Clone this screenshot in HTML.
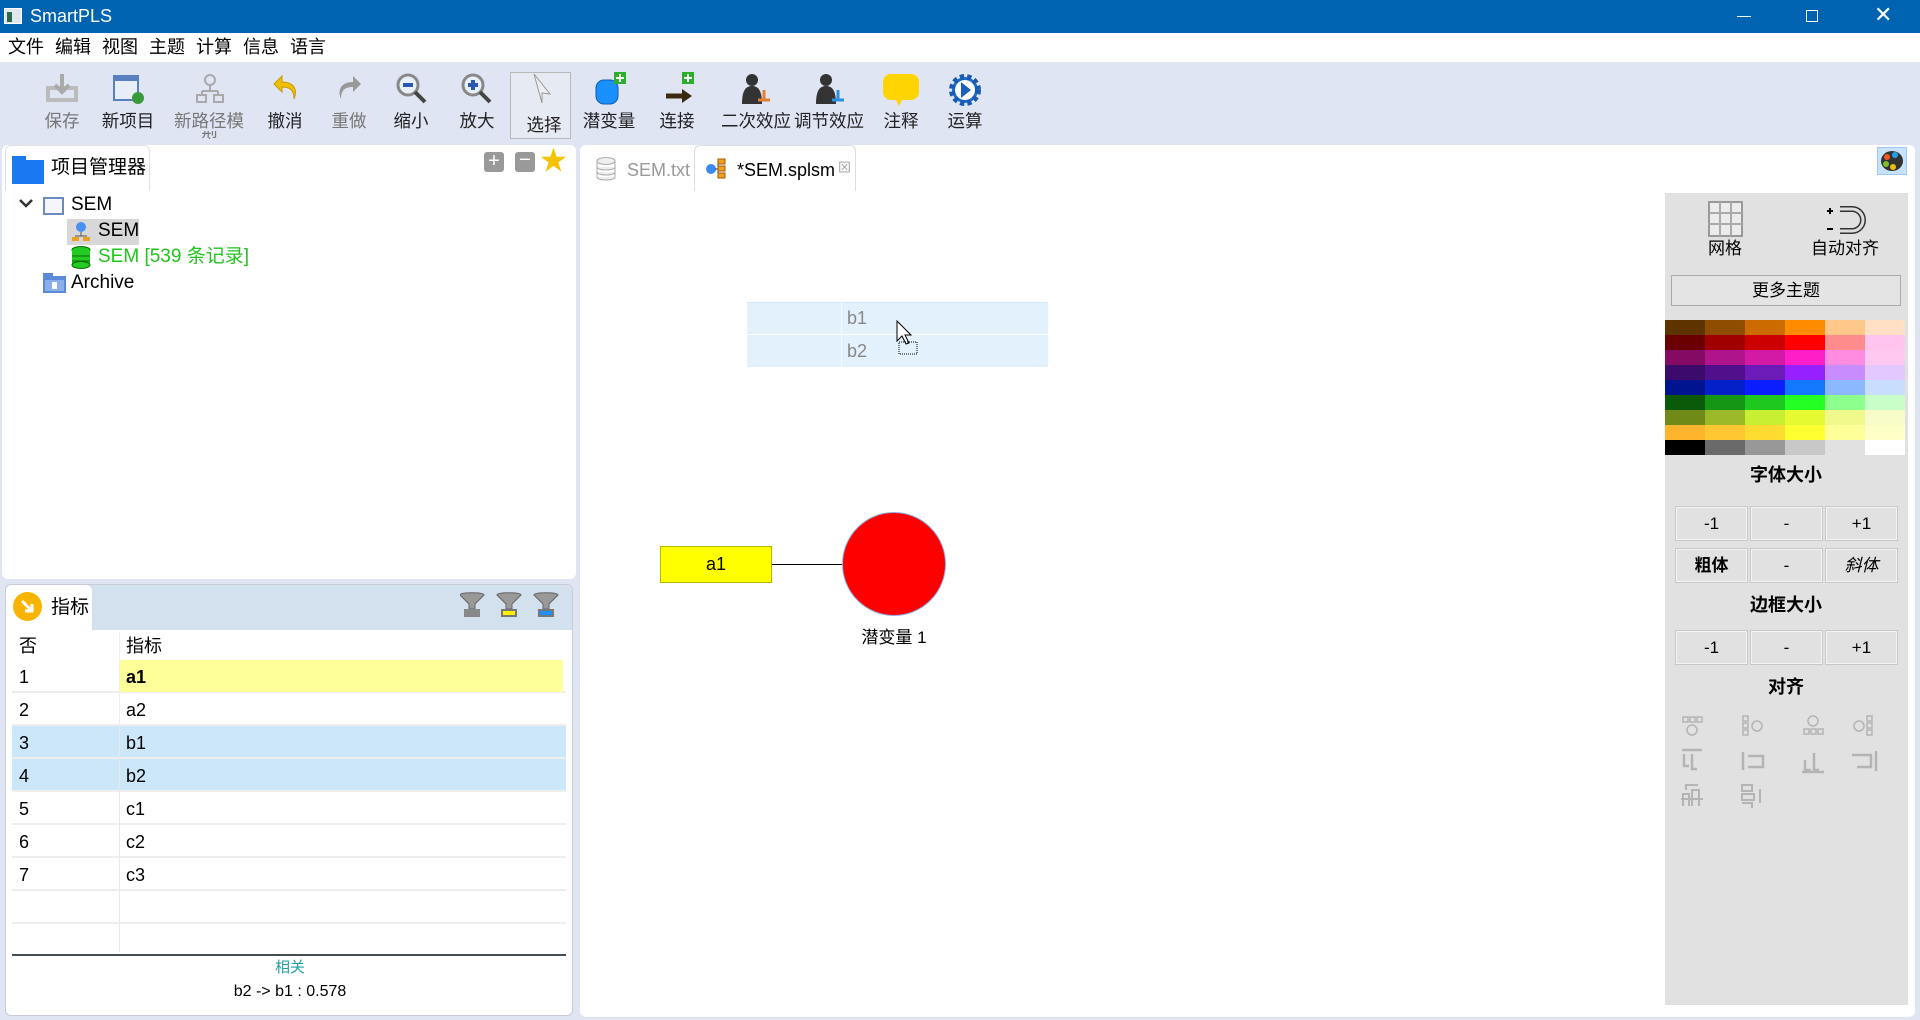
<!DOCTYPE html>
<html><head><meta charset="utf-8"><style>
*{margin:0;padding:0;box-sizing:border-box}
body{width:1920px;height:1020px;position:relative;overflow:hidden;background:#dfe5f3;font-family:"Liberation Sans","Noto Sans CJK SC",sans-serif;color:#000}
.a{position:absolute}
.t{position:absolute;white-space:nowrap;font-size:18px;line-height:1}
.tb{position:absolute;top:108px;font-size:17.5px;color:#222;transform:translateX(-50%);white-space:nowrap}
.ic{position:absolute;top:72px}
.btn{position:absolute;height:35px;width:73px;border:1px solid #c8c8c8;background:#e1e1e1;box-shadow:inset 0 0 0 1px #f4f4f4;font-size:17px;text-align:center;line-height:33px}
.row{position:absolute;left:12px;width:554px;height:33px;border-bottom:2px solid #eeeeee}
.row span{position:absolute;top:7px;font-size:18px}
</style></head><body>
<div class="a" style="left:0;top:0;width:1920px;height:33px;background:#0063b1"></div>
<div class="a" style="left:4px;top:8px;width:18px;height:16px;background:#dfe8f0;border:1px solid #fff"><div class="a" style="left:2px;top:3px;width:5px;height:10px;background:#2a6a4a"></div></div>
<div class="t" style="left:30px;top:7px;color:#fff;font-size:18px">SmartPLS</div>
<div class="a" style="left:1737px;top:16px;width:14px;height:1px;background:#fff"></div>
<div class="a" style="left:1806px;top:10px;width:12px;height:12px;border:1px solid #fff"></div>
<div class="t" style="left:1874px;top:4px;color:#fff;font-size:22px">✕</div>
<div class="a" style="left:0;top:33px;width:1920px;height:29px;background:#fff"></div>
<div class="t" style="left:8px;top:38px;font-size:18px;word-spacing:6px">文件 编辑 视图 主题 计算 信息 语言</div>
<svg class="ic" style="left:46px" width="32" height="32"><rect x="2" y="16" width="28" height="12" fill="none" stroke="#bbb" stroke-width="4"/><path d="M16 2v18M9 13l7 7 7-7" stroke="#aaa" stroke-width="4" fill="none"/></svg>
<svg class="ic" style="left:112px" width="32" height="32"><rect x="2" y="4" width="24" height="24" fill="#e8eef8" stroke="#5a7fc0" stroke-width="2"/><rect x="2" y="4" width="24" height="5" fill="#5a7fc0"/><circle cx="26" cy="26" r="6" fill="#3a9a3a"/></svg>
<svg class="ic" style="left:194px" width="32" height="32"><circle cx="16" cy="8" r="5" fill="none" stroke="#aaa" stroke-width="2"/><path d="M16 13v6M8 19h16M8 19v4M24 19v4" stroke="#aaa" stroke-width="2"/><rect x="3" y="23" width="9" height="7" fill="none" stroke="#aaa" stroke-width="2"/><rect x="20" y="23" width="9" height="7" fill="none" stroke="#aaa" stroke-width="2"/></svg>
<svg class="ic" style="left:270px" width="32" height="32"><path d="M12 4L4 12l8 8v-5c8 0 12 3 12 12 4-9 0-17-12-17z" fill="#f0c000" stroke="#c89a00"/></svg>
<svg class="ic" style="left:333px" width="32" height="32"><path d="M20 4l8 8-8 8v-5c-8 0-12 3-12 12-4-9 0-17 12-17z" fill="#999"/></svg>
<svg class="ic" style="left:395px" width="34" height="34"><circle cx="13" cy="13" r="10" fill="#e8f0fa" stroke="#888" stroke-width="3"/><rect x="8" y="11" width="10" height="4" fill="#2a5ab0"/><path d="M20 20l10 10" stroke="#444" stroke-width="4"/></svg>
<svg class="ic" style="left:460px" width="34" height="34"><circle cx="13" cy="13" r="10" fill="#e8f0fa" stroke="#888" stroke-width="3"/><path d="M8 13h10M13 8v10" stroke="#2a5ab0" stroke-width="4"/><path d="M20 20l10 10" stroke="#444" stroke-width="4"/></svg>
<div class="a" style="left:510px;top:72px;width:61px;height:67px;border:1px solid #b8b8b8;background:#e6eaf2"></div>
<svg class="ic" style="left:530px" width="24" height="34"><path d="M4 2l16 20-8-1 0 10-8-29z" fill="#eee" stroke="#999"/></svg>
<svg class="ic" style="left:594px" width="36" height="34"><rect x="2" y="8" width="22" height="24" rx="8" fill="#1a90ff" stroke="#0a5ab0"/><rect x="20" y="0" width="12" height="12" fill="#2ab02a"/><path d="M26 2v8M22 6h8" stroke="#fff" stroke-width="2"/></svg>
<svg class="ic" style="left:664px" width="32" height="34"><rect x="18" y="0" width="12" height="12" fill="#2ab02a"/><path d="M24 2v8M20 6h8" stroke="#fff" stroke-width="2"/><path d="M2 24h18" stroke="#3a2a10" stroke-width="5"/><path d="M18 17l10 7-10 7z" fill="#3a2a10"/></svg>
<svg class="ic" style="left:738px" width="34" height="34"><circle cx="14" cy="8" r="6" fill="#333"/><path d="M4 32c0-14 4-18 10-18s10 4 10 18z" fill="#333"/><path d="M26 18v10M20 28h12" stroke="#e08030" stroke-width="3"/></svg>
<svg class="ic" style="left:812px" width="34" height="34"><circle cx="14" cy="8" r="6" fill="#333"/><path d="M4 32c0-14 4-18 10-18s10 4 10 18z" fill="#333"/><path d="M26 18v10M20 28h12" stroke="#2a90e0" stroke-width="3"/></svg>
<svg class="ic" style="left:883px" width="36" height="36"><rect x="0" y="2" width="36" height="26" rx="8" fill="#ffd400"/><path d="M12 26l4 8 4-8z" fill="#ffd400"/></svg>
<svg class="ic" style="left:947px" width="36" height="36"><circle cx="18" cy="18" r="13" fill="#1a70d0" stroke="#1a5ab0" stroke-width="6" stroke-dasharray="4 3"/><circle cx="18" cy="18" r="10" fill="#fff"/><path d="M14 10l10 8-10 8z" fill="#1a60c0"/></svg>
<div class="tb" style="left:62px;color:#777">保存</div>
<div class="tb" style="left:128px">新项目</div>
<div class="tb" style="left:209px;color:#777">新路径模</div>
<div class="a" style="left:201px;top:131px;width:16px;height:8px;overflow:hidden;color:#777;font-size:17px;line-height:1"><div style="margin-top:-2px">型</div></div>
<div class="tb" style="left:285px">撤消</div>
<div class="tb" style="left:349px;color:#777">重做</div>
<div class="tb" style="left:411px">缩小</div>
<div class="tb" style="left:477px">放大</div>
<div class="tb" style="left:544px;top:112px">选择</div>
<div class="tb" style="left:609px">潜变量</div>
<div class="tb" style="left:677px">连接</div>
<div class="tb" style="left:756px">二次效应</div>
<div class="tb" style="left:829px">调节效应</div>
<div class="tb" style="left:901px">注释</div>
<div class="tb" style="left:965px">运算</div>
<div class="a" style="left:2px;top:145px;width:574px;height:434px;background:#fff;border-radius:6px"></div>
<div class="a" style="left:5px;top:145px;width:145px;height:46px;border:1px solid #e0e0e0;border-bottom:none;border-radius:6px 6px 0 0"></div>
<div class="a" style="left:12px;top:160px;width:32px;height:24px;background:#1a78f0"></div>
<div class="a" style="left:12px;top:156px;width:14px;height:6px;background:#1a78f0"></div>
<div class="t" style="left:51px;top:158px;font-size:19px">项目管理器</div>
<div class="a" style="left:484px;top:152px;width:20px;height:20px;background:#999;border-radius:3px;color:#fff;font-size:20px;line-height:18px;text-align:center">+</div>
<div class="a" style="left:515px;top:152px;width:20px;height:20px;background:#999;border-radius:3px;color:#fff;font-size:20px;line-height:16px;text-align:center">−</div>
<div class="t" style="left:540px;top:148px;font-size:27px;color:#f5c400">★</div>
<svg class="a" style="left:19px;top:199px" width="14" height="10"><path d="M1 1l6 6 6-6" stroke="#333" stroke-width="2.5" fill="none"/></svg>
<div class="a" style="left:43px;top:197px;width:21px;height:18px;border:2px solid #6a8ac0;background:#f4f6fa"></div>
<div class="t" style="left:71px;top:195px;font-size:19px">SEM</div>
<div class="a" style="left:67px;top:219px;width:72px;height:26px;background:#d8d8d8"></div>
<svg class="a" style="left:71px;top:221px" width="20" height="22"><circle cx="10" cy="6" r="5" fill="#4a90f0"/><path d="M10 11v4M4 15h12" stroke="#555"/><rect x="1" y="16" width="7" height="4" fill="#f0a020"/><rect x="12" y="16" width="7" height="4" fill="#f0a020"/></svg>
<div class="t" style="left:98px;top:221px;font-size:19px">SEM</div>
<svg class="a" style="left:71px;top:246px" width="20" height="23"><ellipse cx="10" cy="4" rx="9" ry="3.5" fill="#22cc22" stroke="#0a6a0a"/><rect x="1" y="4" width="18" height="15" fill="#22cc22"/><ellipse cx="10" cy="19" rx="9" ry="3.5" fill="#22cc22" stroke="#0a6a0a"/><path d="M1 10h18M1 15h18" stroke="#0a6a0a"/></svg>
<div class="t" style="left:98px;top:247px;font-size:19px;color:#22c41e">SEM [539 条记录]</div>
<svg class="a" style="left:43px;top:273px" width="23" height="20"><rect x="0" y="0" width="10" height="4" fill="#5a8ad8"/><rect x="0" y="3" width="23" height="17" fill="#5a8ad8"/><rect x="2" y="7" width="19" height="11" fill="#8ab0ec"/><rect x="9" y="9" width="5" height="7" fill="#fff"/></svg>
<div class="t" style="left:71px;top:273px;font-size:19px">Archive</div>
<div class="a" style="left:5px;top:584px;width:568px;height:432px;background:#fff;border:1px solid #c8ccd4;border-radius:6px"></div>
<div class="a" style="left:6px;top:585px;width:566px;height:45px;background:#d3e0ee;border-radius:6px 6px 0 0"></div>
<div class="a" style="left:6px;top:585px;width:86px;height:46px;background:#fff;border-radius:6px 6px 0 0"></div>
<div class="a" style="left:13px;top:592px;width:29px;height:29px;border-radius:50%;background:#f8b400"></div>
<svg class="a" style="left:19px;top:598px" width="17" height="17"><path d="M3 3l10 10M13 6v7H6" stroke="#fff" stroke-width="3" fill="none"/></svg>
<div class="t" style="left:51px;top:598px;font-size:19px">指标</div>
<svg class="a" style="left:460px;top:592px" width="100" height="28"><path d="M0 3c0-3 24-3 24 0l-9 9v5h-6v-5z" fill="#999" stroke="#666"/><rect x="4" y="17" width="16" height="8" fill="#888"/><path d="M37 3c0-3 24-3 24 0l-9 9v5h-6v-5z" fill="#999" stroke="#666"/><rect x="41" y="17" width="16" height="8" fill="#777"/><rect x="43" y="19" width="12" height="4" fill="#ffee00"/><path d="M74 3c0-3 24-3 24 0l-9 9v5h-6v-5z" fill="#999" stroke="#666"/><rect x="78" y="17" width="16" height="8" fill="#777"/><rect x="80" y="19" width="12" height="4" fill="#1a90ff"/></svg>
<div class="a" style="left:119px;top:632px;width:1px;height:320px;background:#eeeeee"></div>
<div class="t" style="left:19px;top:637px">否</div>
<div class="t" style="left:126px;top:637px">指标</div>
<div class="row" style="top:660px"><div class="a" style="left:108px;top:0;width:443px;height:32px;background:#ffff99"></div><span style="left:7px">1</span><span style="left:114px;font-weight:bold">a1</span></div>
<div class="row" style="top:693px"><span style="left:7px">2</span><span style="left:114px">a2</span></div>
<div class="row" style="top:726px;background:#cce6fa"><span style="left:7px">3</span><span style="left:114px">b1</span></div>
<div class="row" style="top:759px;background:#cce6fa"><span style="left:7px">4</span><span style="left:114px">b2</span></div>
<div class="row" style="top:792px"><span style="left:7px">5</span><span style="left:114px">c1</span></div>
<div class="row" style="top:825px"><span style="left:7px">6</span><span style="left:114px">c2</span></div>
<div class="row" style="top:858px"><span style="left:7px">7</span><span style="left:114px">c3</span></div>
<div class="row" style="top:891px"></div>
<div class="a" style="left:119px;top:726px;width:1px;height:226px;background:#e8e8e8"></div>
<div class="a" style="left:12px;top:954px;width:554px;height:2px;background:#444c54"></div>
<div class="t" style="left:290px;top:960px;font-size:15px;color:#22a0a0;transform:translateX(-50%)">相关</div>
<div class="t" style="left:290px;top:984px;font-size:16px;transform:translateX(-50%)">b2 -&gt; b1 : 0.578</div>
<div class="a" style="left:580px;top:145px;width:1335px;height:872px;background:#fff;border-radius:6px"></div>
<svg class="a" style="left:596px;top:157px" width="20" height="24"><ellipse cx="10" cy="4" rx="9" ry="3.5" fill="#eee" stroke="#aaa"/><path d="M1 4v16M19 4v16M1 10c0 4 18 4 18 0M1 15c0 4 18 4 18 0M1 20c0 4 18 4 18 0" stroke="#aaa" fill="#eee"/></svg>
<div class="t" style="left:627px;top:161px;color:#999">SEM.txt</div>
<div class="a" style="left:694px;top:145px;width:162px;height:46px;border:1px solid #dadde4;border-bottom:none;border-radius:6px 6px 0 0"></div>
<svg class="a" style="left:705px;top:158px" width="22" height="22"><circle cx="6" cy="11" r="5" fill="#3a8af0"/><path d="M10 11h3M13 3v16" stroke="#333"/><rect x="13" y="1" width="7" height="5" fill="#f0a020" stroke="#a05a00"/><rect x="13" y="8" width="7" height="5" fill="#f0a020" stroke="#a05a00"/><rect x="13" y="15" width="7" height="5" fill="#f0a020" stroke="#a05a00"/></svg>
<div class="t" style="left:737px;top:161px">*SEM.splsm</div>
<div class="t" style="left:838px;top:161px;font-size:13px;color:#999">⊠</div>
<div class="a" style="left:1877px;top:147px;width:30px;height:28px;background:#c8e2fa;border:1px solid #9ccaf4"></div>
<svg class="a" style="left:1880px;top:150px" width="24" height="22"><ellipse cx="12" cy="11" rx="11" ry="10" fill="#333"/><circle cx="7" cy="7" r="3" fill="#f05a20"/><circle cx="15" cy="5" r="3" fill="#20a0f0"/><circle cx="6" cy="14" r="3" fill="#80c020"/><circle cx="13" cy="17" r="3" fill="#f0c000"/></svg>
<div class="a" style="left:747px;top:302px;width:301px;height:32px;background:#e3f1fd;border-top:1px solid #cfe6fa"></div>
<div class="a" style="left:747px;top:335px;width:301px;height:32px;background:#e3f1fd"></div>
<div class="a" style="left:841px;top:302px;width:1px;height:65px;background:#f4f9fe"></div>
<div class="t" style="left:847px;top:309px;color:#888">b1</div>
<div class="t" style="left:847px;top:342px;color:#888">b2</div>
<svg class="a" style="left:896px;top:320px" width="24" height="38"><path d="M1 1v20l5-5 4 8 3-1-4-8h6z" fill="#fff" stroke="#000"/><rect x="3" y="22" width="18" height="12" fill="none" stroke="#000" stroke-dasharray="1 1"/></svg>
<div class="a" style="left:660px;top:546px;width:112px;height:37px;background:#ffff00;border:1px solid #b8b800"></div>
<div class="t" style="left:716px;top:555px;transform:translateX(-50%)">a1</div>
<div class="a" style="left:772px;top:564px;width:70px;height:1px;background:#000"></div>
<div class="a" style="left:842px;top:512px;width:104px;height:104px;border-radius:50%;background:#ff0000;border:1px solid #8aaede"></div>
<div class="t" style="left:894px;top:629px;transform:translateX(-50%);font-size:17px">潜变量 1</div>
<div class="a" style="left:1665px;top:193px;width:243px;height:812px;background:#e1e1e1"></div>
<svg class="a" style="left:1708px;top:201px" width="35" height="36"><rect x="1" y="1" width="33" height="34" fill="#ececec" stroke="#999" stroke-width="2"/><path d="M12 1v34M23 1v34M1 12h33M1 23h33" stroke="#aaa" stroke-width="2"/></svg>
<div class="t" style="left:1725px;top:240px;transform:translateX(-50%);font-size:17px">网格</div>
<svg class="a" style="left:1826px;top:204px" width="40" height="32"><path d="M14 5h12a10 10 0 0 1 0 22H14" stroke="#333" stroke-width="6" fill="none"/><path d="M14 5h12a10 10 0 0 1 0 22H14" stroke="#ddd" stroke-width="3" fill="none"/><path d="M1 7h6M4 4v6M1 25h6" stroke="#000" stroke-width="2"/></svg>
<div class="t" style="left:1845px;top:240px;transform:translateX(-50%);font-size:17px">自动对齐</div>
<div class="a" style="left:1671px;top:275px;width:230px;height:31px;border:1px solid #aaa;background:#e4e4e4;text-align:center;font-size:17px;line-height:29px">更多主题</div>
<svg class="a" style="left:1665px;top:320px" width="240" height="135">
<g shape-rendering="crispEdges">
<rect x="0" y="0" width="40" height="15" fill="#5e3300"/><rect x="40" y="0" width="40" height="15" fill="#8e4d00"/><rect x="80" y="0" width="40" height="15" fill="#cc6c00"/><rect x="120" y="0" width="40" height="15" fill="#ff8c00"/><rect x="160" y="0" width="40" height="15" fill="#ffc88a"/><rect x="200" y="0" width="40" height="15" fill="#ffe0c4"/>
<rect x="0" y="15" width="40" height="15" fill="#6b0000"/><rect x="40" y="15" width="40" height="15" fill="#a00000"/><rect x="80" y="15" width="40" height="15" fill="#cc0000"/><rect x="120" y="15" width="40" height="15" fill="#ff0000"/><rect x="160" y="15" width="40" height="15" fill="#ff8c8c"/><rect x="200" y="15" width="40" height="15" fill="#ffc4f0"/>
<rect x="0" y="30" width="40" height="15" fill="#850a64"/><rect x="40" y="30" width="40" height="15" fill="#b0148c"/><rect x="80" y="30" width="40" height="15" fill="#d21aa6"/><rect x="120" y="30" width="40" height="15" fill="#ff1ec8"/><rect x="160" y="30" width="40" height="15" fill="#ff8ce0"/><rect x="200" y="30" width="40" height="15" fill="#ffc8f0"/>
<rect x="0" y="45" width="40" height="15" fill="#3c0a6a"/><rect x="40" y="45" width="40" height="15" fill="#50108c"/><rect x="80" y="45" width="40" height="15" fill="#6c1ab8"/><rect x="120" y="45" width="40" height="15" fill="#9620ff"/><rect x="160" y="45" width="40" height="15" fill="#c88cff"/><rect x="200" y="45" width="40" height="15" fill="#e2c8ff"/>
<rect x="0" y="60" width="40" height="15" fill="#001490"/><rect x="40" y="60" width="40" height="15" fill="#0420c8"/><rect x="80" y="60" width="40" height="15" fill="#0a1eff"/><rect x="120" y="60" width="40" height="15" fill="#1478ff"/><rect x="160" y="60" width="40" height="15" fill="#8cb8ff"/><rect x="200" y="60" width="40" height="15" fill="#c8deff"/>
<rect x="0" y="75" width="40" height="15" fill="#0a5a0a"/><rect x="40" y="75" width="40" height="15" fill="#149614"/><rect x="80" y="75" width="40" height="15" fill="#1ec81e"/><rect x="120" y="75" width="40" height="15" fill="#24ff24"/><rect x="160" y="75" width="40" height="15" fill="#8cff8c"/><rect x="200" y="75" width="40" height="15" fill="#c8ffc8"/>
<rect x="0" y="90" width="40" height="15" fill="#708a18"/><rect x="40" y="90" width="40" height="15" fill="#9ab828"/><rect x="80" y="90" width="40" height="15" fill="#c8f032"/><rect x="120" y="90" width="40" height="15" fill="#e6fa32"/><rect x="160" y="90" width="40" height="15" fill="#f0fa8c"/><rect x="200" y="90" width="40" height="15" fill="#f8fcc8"/>
<rect x="0" y="105" width="40" height="15" fill="#ffb42e"/><rect x="40" y="105" width="40" height="15" fill="#ffc832"/><rect x="80" y="105" width="40" height="15" fill="#ffdc32"/><rect x="120" y="105" width="40" height="15" fill="#ffff32"/><rect x="160" y="105" width="40" height="15" fill="#ffff9a"/><rect x="200" y="105" width="40" height="15" fill="#ffffc8"/>
<rect x="0" y="120" width="40" height="15" fill="#000"/><rect x="40" y="120" width="40" height="15" fill="#6a6a6a"/><rect x="80" y="120" width="40" height="15" fill="#989898"/><rect x="120" y="120" width="40" height="15" fill="#c8c8c8"/><rect x="160" y="120" width="40" height="15" fill="#e1e1e1"/><rect x="200" y="120" width="40" height="15" fill="#fff"/>
</g></svg>
<div class="t" style="left:1786px;top:466px;transform:translateX(-50%);font-size:18px;font-weight:bold">字体大小</div>
<div class="btn" style="left:1675px;top:506px">-1</div><div class="btn" style="left:1750px;top:506px">-</div><div class="btn" style="left:1825px;top:506px">+1</div>
<div class="btn" style="left:1675px;top:548px;font-weight:bold">粗体</div><div class="btn" style="left:1750px;top:548px">-</div><div class="btn" style="left:1825px;top:548px;font-style:italic">斜体</div>
<div class="t" style="left:1786px;top:596px;transform:translateX(-50%);font-size:18px;font-weight:bold">边框大小</div>
<div class="btn" style="left:1675px;top:630px">-1</div><div class="btn" style="left:1750px;top:630px">-</div><div class="btn" style="left:1825px;top:630px">+1</div>
<div class="t" style="left:1786px;top:678px;transform:translateX(-50%);font-size:18px;font-weight:bold">对齐</div>
<svg class="a" style="left:1680px;top:715px" width="220" height="120" fill="none" stroke="#b4b4b4" stroke-width="1.5">
<g transform="translate(0,0) scale(1.0)">
<rect x="3" y="2" width="5" height="5"/><rect x="10" y="2" width="5" height="5"/><rect x="17" y="2" width="5" height="5"/><circle cx="12" cy="15" r="5"/>
<rect x="63" y="1" width="5" height="5"/><rect x="63" y="8" width="5" height="5"/><rect x="63" y="15" width="5" height="5"/><circle cx="77" cy="11" r="5"/>
<circle cx="133" cy="6" r="5"/><rect x="124" y="14" width="5" height="5"/><rect x="131" y="14" width="5" height="5"/><rect x="138" y="14" width="5" height="5"/>
<circle cx="179" cy="11" r="5"/><rect x="187" y="1" width="5" height="5"/><rect x="187" y="8" width="5" height="5"/><rect x="187" y="15" width="5" height="5"/>
<path d="M2 35h20M4 39v12h5M12 39v15h5" stroke-width="2.5"/><path d="M63 37v18M68 41h15v11H68" stroke-width="2.5"/><path d="M122 57h22M125 45v10h6M134 38v17h5" stroke-width="2.5"/><path d="M196 36v20M172 40h19v12h-14" stroke-width="2.5"/>
<path d="M3 91v-12h6v12M12 91v-16h7v16M1 84h22M6 75v-5h12" stroke-width="2"/><path d="M62 70h10v6h-10zM62 79h12v6H62zM62 88h10v5M80 74v14" stroke-width="2"/>
</g></svg>
</body></html>
